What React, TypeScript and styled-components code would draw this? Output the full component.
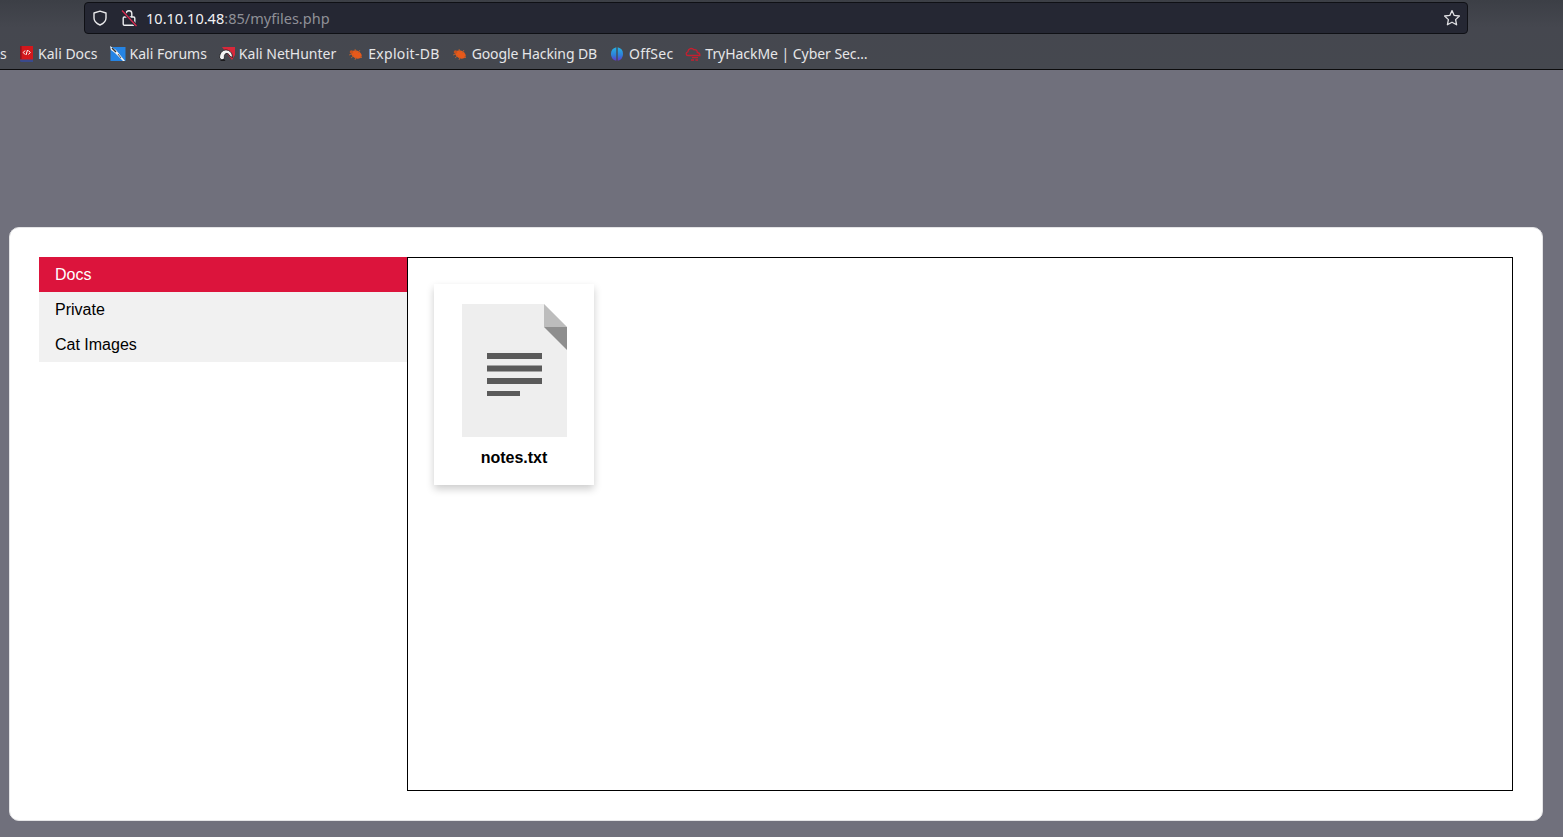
import React from "react";
import styled, { createGlobalStyle } from "styled-components";

const Global = createGlobalStyle`
  html, body { margin: 0; padding: 0; height: 100%; overflow: hidden; }
  body { background: #70707c; font-family: "Liberation Sans", Arial, sans-serif; }
  #root { height: 100%; }
`;

const Page = styled.div`
  height: 837px;
  display: flex;
  flex-direction: column;
`;

const Toolbar = styled.header`
  height: 69px;
  flex: none;
  border-bottom: 1px solid #0c0c0d;
  background: linear-gradient(#3c3f46, #45474f 40%, #45484f);
  display: flex;
  flex-direction: column;
`;

const UrlRow = styled.div`
  height: 32px;
  margin: 2px 0 0 84px;
  width: 1384px;
  box-sizing: border-box;
  display: flex;
  align-items: center;
  background: #252733;
  border: 1px solid #0f1015;
  border-radius: 4px;
  padding: 0 6px 0 7px;
`;

const UrlText = styled.span`
  margin-left: 9px;
  font: 400 14.5px "Noto Sans", sans-serif;
  color: #f2f2f5;
  flex: 1;
  letter-spacing: 0.02px;
`;

const UrlMuted = styled.span`
  color: #8f9097;
`;

const Bookmarks = styled.nav`
  flex: 1;
  display: flex;
  align-items: center;
  gap: 12px;
  padding-top: 4px;
  color: #e6e6e8;
  font: 400 14px "Noto Sans", sans-serif;
`;

const Fragment = styled.span`
  width: 6px;
  flex: none;
`;

const Bookmark = styled.span<{ $spacing?: number }>`
  display: inline-flex;
  align-items: center;
  gap: 4px;
  white-space: nowrap;
  letter-spacing: ${(p) => p.$spacing ?? 0}px;
`;

const Main = styled.main`
  flex: 1;
  padding: 157px 20px 16px 9px;
  display: flex;
  min-height: 0;
`;

const Card = styled.section`
  flex: 1;
  box-sizing: border-box;
  background: #fff;
  border: 1px solid #e4e4e6;
  border-radius: 10px;
  padding: 29px;
  display: grid;
  grid-template-columns: 368px 1fr;
`;

const Tabs = styled.div`
  display: flex;
  flex-direction: column;
`;

const Tab = styled.div<{ $active?: boolean }>`
  height: 35px;
  line-height: 35px;
  padding-left: 16px;
  font-size: 16px;
  color: ${(p) => (p.$active ? "#fff" : "#000")};
  background: ${(p) => (p.$active ? "#dc143c" : "#f1f1f1")};
`;

const Panel = styled.div`
  border: 1px solid #000;
  padding: 26px;
`;

const FileCard = styled.div`
  width: 160px;
  height: 201px;
  box-sizing: border-box;
  padding-top: 20px;
  box-shadow: 0 4px 8px rgba(0, 0, 0, 0.2);
  display: flex;
  flex-direction: column;
  align-items: center;
`;

const FileName = styled.div`
  margin-top: 12px;
  font-size: 16px;
  font-weight: 700;
  line-height: 18px;
  color: #000;
`;

const Shield = () => (
  <svg width="16" height="16" viewBox="0 0 16 16" fill="none" stroke="#e8e8ea" strokeWidth="1.4">
    <path d="M8 1.200 14 3v5c0 3.300-2.600 5.600-6 7-3.400-1.400-6-3.700-6-7V3z" strokeLinejoin="round" />
  </svg>
);

const Lock = () => (
  <svg width="16" height="18" viewBox="0 0 16 18" fill="none" style={{ marginLeft: 13 }}>
    <path d="M5.200 8V4.500a2.800 2.800 0 0 1 5.600 0V8" stroke="#eeeef0" strokeWidth="1.4" />
    <rect x="2.200" y="8" width="11.600" height="8.300" rx="1.200" stroke="#eeeef0" strokeWidth="1.400" />
    <path d="M1 1.500 15.500 17" stroke="#252733" strokeWidth="3" />
    <path d="M1 1.500 15.500 17" stroke="#dc2a50" strokeWidth="1.200" />
  </svg>
);

const Star = () => (
  <svg width="18" height="18" viewBox="0 0 18 18" fill="none" stroke="#e0e0e3" strokeWidth="1.3" strokeLinejoin="round">
    <path d="M9 1.600 11.200 6.400 16.400 7 12.600 10.600 13.600 15.800 9 13.200 4.400 15.800 5.400 10.600 1.600 7 6.800 6.400z" />
  </svg>
);

const KaliDocsIcon = () => (
  <svg width="16" height="16" viewBox="0 0 16 16">
    <path d="M2 0h13v14H3.500A1.500 1.500 0 0 1 2 12.500z" fill="#d3181c" />
    <path d="M2 13.500h13V16H3.500A1.500 1.500 0 0 1 2 14.500z" fill="#3a4a8c" />
    <path d="M2 0h1.600v13H2z" fill="#8e1420" />
    <path d="M7 4.500 5.300 6.500 7 8.500M10.500 4.500 12.200 6.500 10.500 8.500M9.500 4 8 9" stroke="#fff" strokeWidth="1" fill="none" />
  </svg>
);

const KaliForumsIcon = () => (
  <svg width="16" height="16" viewBox="0 0 16 16">
    <rect x="0.500" y="1" width="15" height="14" fill="#2584e4" />
    <path d="M0 0 6 4l9 11h-2L5 7 1 4z" fill="#f3f3f3" />
    <path d="M2 2 6 6" stroke="#333" strokeWidth="1.400" />
    <path d="M8 8l3 4" stroke="#555" strokeWidth="1" />
  </svg>
);

const NetHunterIcon = () => (
  <svg width="16" height="16" viewBox="0 0 16 16">
    <path d="M3 1h13v8l-3 5z" fill="#d8283a" />
    <path d="M0.500 12C0.500 6 5 2.500 9.500 4.500c2.500 1.100 4 3.500 4 7l-2.800-1.500C10 8 8.500 7 7 7.500 5.500 8 5 10 5.500 12.500L3 14z" fill="#f4f4f4" stroke="#1c1c1f" strokeWidth="0.800" />
    <path d="M1 14.500l4-1.500 1.500 2H2z" fill="#1c1c1f" />
  </svg>
);

const BugIcon = () => (
  <svg width="16" height="16" viewBox="0 0 16 16">
    <ellipse cx="8.500" cy="8.500" rx="5.500" ry="3.800" fill="#e8591a" transform="rotate(25 8.500 8.500)" />
    <circle cx="3.500" cy="6" r="1.800" fill="#c9521c" />
    <path d="M1 9l3-1M3 12l3-2.500M7 14l1-3M12 4l-2 3M7 3l1 3M14 12l-2-2" stroke="#b8602e" strokeWidth="0.900" />
  </svg>
);

const OffSecIcon = () => (
  <svg width="16" height="16" viewBox="0 0 16 16">
    <defs>
      <linearGradient id="off" x1="0" y1="0" x2="0" y2="1">
        <stop offset="0" stopColor="#25b4e6" />
        <stop offset="0.6" stopColor="#2f7ed8" />
        <stop offset="1" stopColor="#6236cc" />
      </linearGradient>
    </defs>
    <path d="M7.300 1.200V14.800A7 7 0 0 1 7.300 1.200z" fill="url(#off)" />
    <path d="M8.700 1.200V14.800A7 7 0 0 0 8.700 1.200z" fill="url(#off)" />
  </svg>
);

const TryHackMeIcon = () => (
  <svg width="16" height="16" viewBox="0 0 16 16" fill="none" stroke="#c42030" strokeWidth="1.300">
    <path d="M3 9.500C.8 9.500.4 6.300 2.800 5.800 3.200 2.800 7 1.300 9 3.800c2-.5 3.500 1 3.300 2.700 1.700.2 2.700 1.300 2.600 3H3z" />
    <path d="M7 11.600h6M6 14h3M10.500 14h2.500" />
  </svg>
);

const FileIcon = () => (
  <svg width="105" height="133" viewBox="0 0 105 133">
    <path d="M0 0H82L105 23V133H0z" fill="#eeeeee" />
    <path d="M82 0 105 23H82z" fill="#bdbdbd" />
    <path d="M82 23H105V46z" fill="#8e8e8e" />
    <rect x="25" y="49" width="55" height="6" fill="#5a5a5a" />
    <rect x="25" y="61.500" width="55" height="6" fill="#5a5a5a" />
    <rect x="25" y="74" width="55" height="6" fill="#5a5a5a" />
    <rect x="25" y="87" width="33" height="5" fill="#5a5a5a" />
  </svg>
);

export default function App() {
  return (
    <Page>
      <Global />
      <Toolbar>
        <UrlRow>
          <Shield />
          <Lock />
          <UrlText>
            10.10.10.48<UrlMuted>:85/myfiles.php</UrlMuted>
          </UrlText>
          <Star />
        </UrlRow>
        <Bookmarks>
          <Fragment>s</Fragment>
          <Bookmark><KaliDocsIcon />Kali Docs</Bookmark>
          <Bookmark><KaliForumsIcon />Kali Forums</Bookmark>
          <Bookmark><NetHunterIcon />Kali NetHunter</Bookmark>
          <Bookmark $spacing={0.3}><BugIcon />Exploit-DB</Bookmark>
          <Bookmark $spacing={-0.1}><BugIcon />Google Hacking DB</Bookmark>
          <Bookmark $spacing={0.23}><OffSecIcon />OffSec</Bookmark>
          <Bookmark $spacing={-0.05}><TryHackMeIcon />TryHackMe | Cyber Sec…</Bookmark>
        </Bookmarks>
      </Toolbar>
      <Main>
        <Card>
          <Tabs>
            <Tab $active>Docs</Tab>
            <Tab>Private</Tab>
            <Tab>Cat Images</Tab>
          </Tabs>
          <Panel>
            <FileCard>
              <FileIcon />
              <FileName>notes.txt</FileName>
            </FileCard>
          </Panel>
        </Card>
      </Main>
    </Page>
  );
}
